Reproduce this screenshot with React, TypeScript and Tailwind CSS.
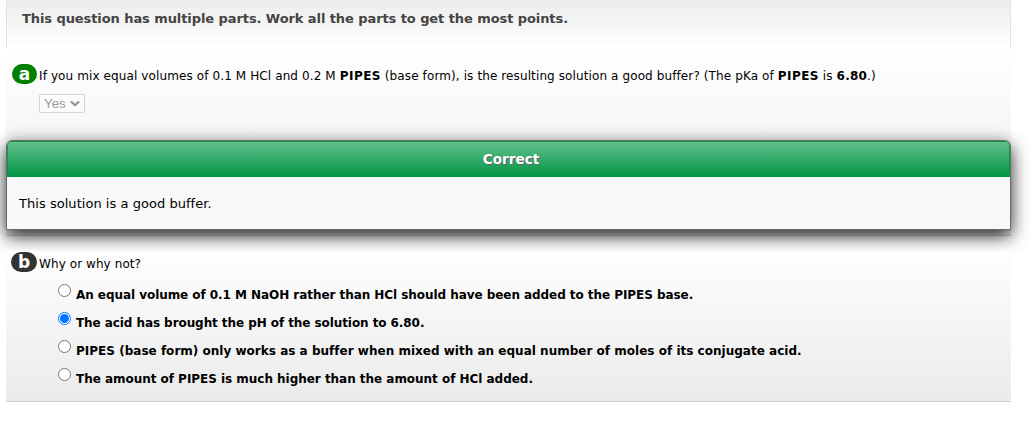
import clsx from "clsx";

const options = [
    { text: "An equal volume of 0.1 M NaOH rather than HCl should have been added to the PIPES base.", tracking: "tracking-[-0.055px]" },
    { text: "The acid has brought the pH of the solution to 6.80.", tracking: "tracking-[-0.075px]", checked: true },
    { text: "PIPES (base form) only works as a buffer when mixed with an equal number of moles of its conjugate acid.", tracking: "tracking-[0.015px]" },
    { text: "The amount of PIPES is much higher than the amount of HCl added.", tracking: "tracking-[-0.03px]" },
];

function PartBadge({ label, className }: { label: string; className: string }) {
    return (
        <span
            className={clsx(
                "flex h-5 shrink-0 items-center justify-center rounded-[10px] text-[17px] leading-5 font-bold text-white",
                className,
            )}
        >
            {label}
        </span>
    );
}

function Radio({ checked }: { checked?: boolean }) {
    return (
        <span
            className={clsx(
                "flex size-[13px] shrink-0 items-center justify-center rounded-full border bg-white",
                checked ? "border-[#0075ff]" : "border-[#767676]",
            )}
        >
            {checked && <span className="size-[9px] rounded-full bg-[#0075ff]" />}
        </span>
    );
}

export default function App() {
    return (
        <div className="h-[422px] w-[1031px] overflow-hidden bg-white pl-[6px] font-['Verdana','DejaVu_Sans',sans-serif] text-[12px] whitespace-nowrap text-black">
            <div className="w-[1005px]">
                {/* Notice */}
                <header className="h-12 border-x border-[#e2e2e2] bg-linear-to-b/srgb from-[#ececec] to-white pt-[11px] pl-[15px]">
                    <p className="text-[13px] leading-4 font-bold tracking-[-0.08px] text-[#444]">
                        This question has multiple parts. Work all the parts to get the most points.
                    </p>
                </header>

                {/* Part a */}
                <section className="h-[188px] border-b border-[#ccc] bg-linear-to-b/srgb from-white to-[#ebebeb] pt-4">
                    <div className="flex pl-[6px]">
                        <PartBadge label="a" className="w-[25px] bg-[#008000]" />
                        <p className="ml-[2px] pt-[4px] leading-4 tracking-[0.11px]">
                            If you mix equal volumes of 0.1 M HCl and 0.2 M <b className="tracking-[0.45px]">PIPES</b> (base
                            form), is the resulting solution a good buffer? (The pKa of{" "}
                            <b className="tracking-[0.45px]">PIPES</b> is <b className="tracking-[0.2px]">6.80</b>.)
                        </p>
                    </div>
                    <div className="mt-[10px] ml-[33px] flex h-[19px] w-[46px] items-center rounded-[2px] border border-[#d4d4d4] bg-[#fbfbfb] pl-[4px] font-['Liberation_Sans',Arial,sans-serif] text-[13.333px] text-[#999]">
                        Yes
                        <svg className="ml-[4px]" width="10" height="7" viewBox="0 0 10 7" fill="none" stroke="#8c8c8c" strokeWidth="2">
                            <path d="M1 1.5 L5 5.2 L9 1.5" />
                        </svg>
                    </div>

                    {/* Feedback */}
                    <div className="relative mt-[27px] h-[90px] rounded-t-[6px] border border-[#6b6b6b] bg-[#f8f8f8] shadow-[0_6px_18px_#222]">
                        <h2 className="h-9 rounded-t-[5px] border-x border-t border-[#0d9448] bg-linear-to-b/srgb from-[#62c08e] to-[#009543] pt-[9px] pl-[5px] text-center text-[13.6px] leading-4 font-bold text-white [text-shadow:1px_1px_1px_#666]">
                            Correct
                        </h2>
                        <p className="ml-3 pt-[19px] text-[13px] leading-4 tracking-[0.04px]">This solution is a good buffer.</p>
                    </div>
                </section>

                {/* Part b */}
                <section className="relative mt-[15px] h-[151px] border-b border-[#ccc] bg-linear-to-b/srgb from-[#fefefe] to-[#ebebeb] pt-px">
                    <div className="flex pl-[5px]">
                        <PartBadge label="b" className="w-[26px] bg-[#333]" />
                        <p className="ml-[2px] pt-[4px] leading-4 tracking-[0.08px]">Why or why not?</p>
                    </div>
                    <ul className="mt-3 ml-[52px]">
                        {options.map((o) => (
                            <li key={o.text} className="flex h-7">
                                <Radio checked={o.checked} />
                                <span className={clsx("ml-[5px] pt-[3px] leading-4 font-bold", o.tracking)}>{o.text}</span>
                            </li>
                        ))}
                    </ul>
                </section>
            </div>
        </div>
    );
}
